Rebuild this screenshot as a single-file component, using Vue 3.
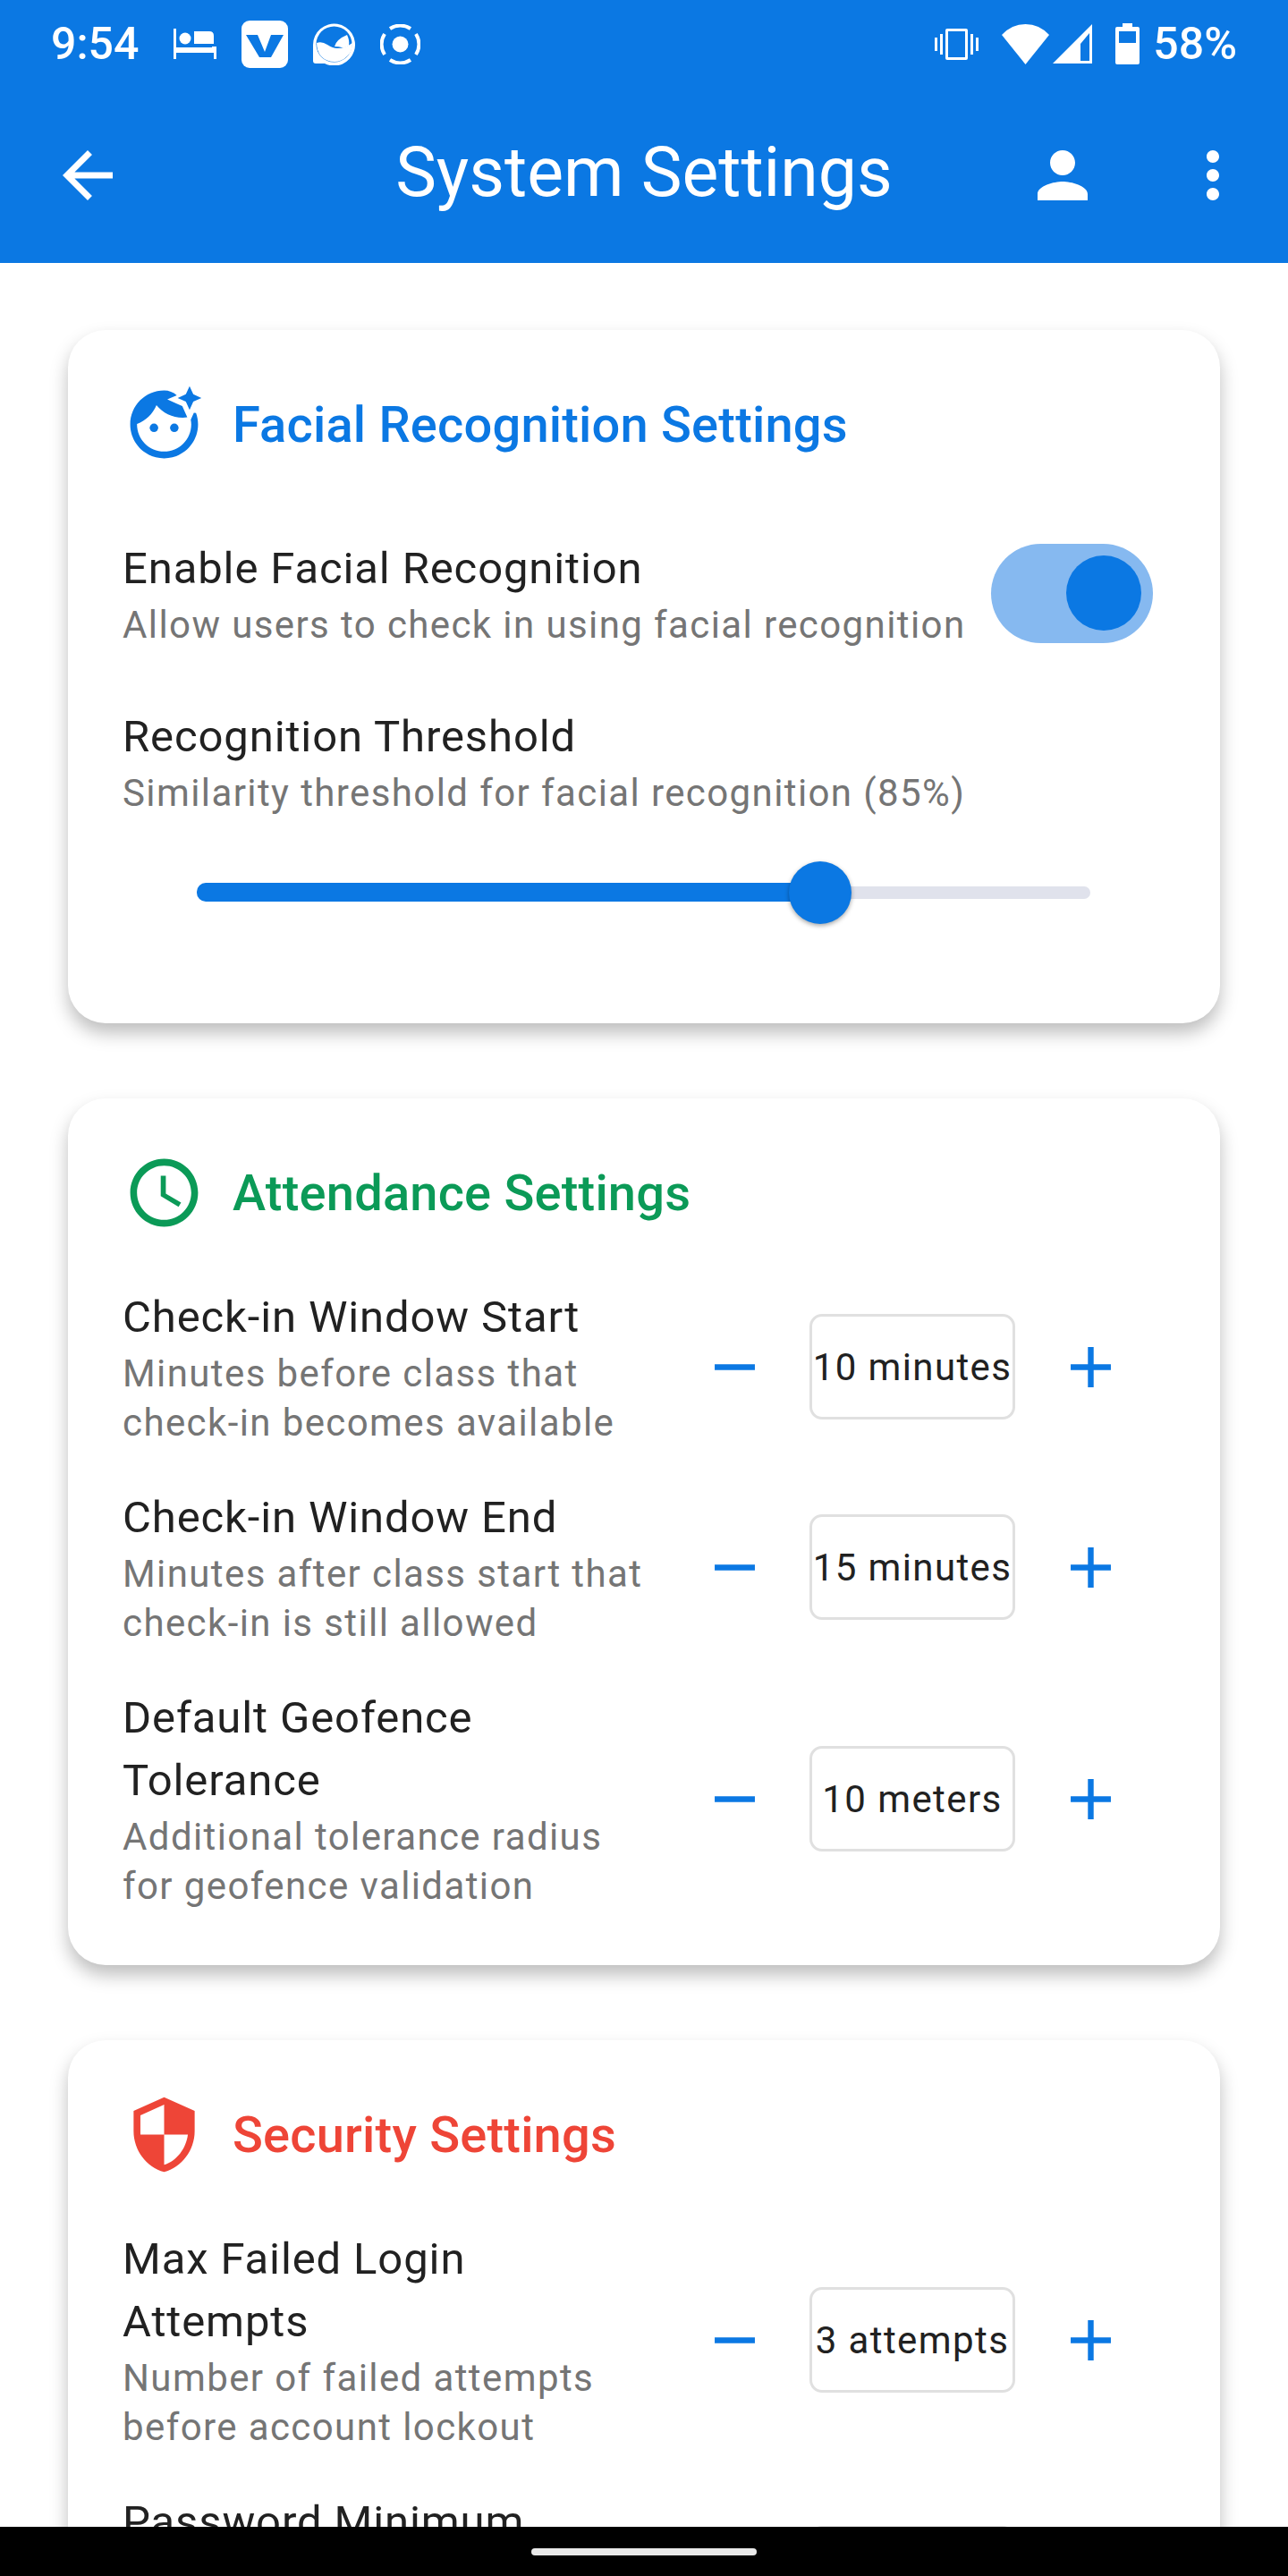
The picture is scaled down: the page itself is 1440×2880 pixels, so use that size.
<template>
  <div class="screen">
    <div class="status-bar">
      <div class="status-left">
        <span class="time">9:54</span>
        <svg class="ic-bed" width="48" height="34" viewBox="0 0 48 34" fill="#fff">
          <path d="M0 0h3v21h40v-1h2V8q0-5-5-5H23v14h22v3h3v14h-3v-7H3v7H0z" />
          <circle cx="13" cy="11" r="6.5" />
        </svg>
        <svg width="52" height="53" viewBox="0 0 52 53">
          <rect width="52" height="53" rx="9" fill="#fff" />
          <path d="M5 16h13l8 19 7-19h14L33 41H20z" fill="#0b78e3" />
        </svg>
        <svg width="47" height="47" viewBox="0 0 47 47">
          <path d="M0 24a23.500 23.500 0 1 1 13 21H3q-3 0-3-3z" fill="#fff" />
          <circle cx="23.500" cy="23.500" r="20" fill="#0b78e3" />
          <path d="M4 22q6-2 12 2t11 4q9 0 17-6 0 10-6 15-6 6-14 6-9 0-15-6-5-6-5-15z" fill="#fff" />
          <path d="M24 26q2-8 14-13 3 6 2 12-5 3-8 2t-8-1z" fill="#fff" />
        </svg>
        <svg width="45" height="45" viewBox="0 0 45 45" fill="none" stroke="#fff" stroke-width="4">
          <circle cx="22.500" cy="22.500" r="9" fill="#fff" stroke="none" />
          <path d="M11 5a21 21 0 0 1 23 0M40 11a21 21 0 0 1 0 23M34 40a21 21 0 0 1-23 0M5 34a21 21 0 0 1 0-23" />
        </svg>
      </div>
      <div class="status-right">
        <svg width="49" height="35" viewBox="0 0 49 35" fill="#fff">
          <path d="M14 0h21q2 0 2 2v31q0 2-2 2H14q-2 0-2-2V2q0-2 2-2zm1 3v29h19V3z" />
          <rect x="0" y="10" width="3" height="15" />
          <rect x="6" y="6" width="3" height="23" />
          <rect x="40" y="6" width="3" height="23" />
          <rect x="46" y="10" width="3" height="15" />
        </svg>
        <svg width="53" height="45" viewBox="0 0 53 45" fill="#fff">
          <path d="M0 12Q11 0 26.500 0T53 12L26.500 45z" />
        </svg>
        <svg width="44" height="44" viewBox="0 0 44 44" fill="#fff" fill-rule="evenodd">
          <path d="M44 0v44H0zM41 10 31 22v19h10z" />
        </svg>
        <svg width="27" height="46" viewBox="0 0 27 46" fill="#fff" fill-rule="evenodd">
          <path d="M8 0h11v4h6q2 0 2 2v38q0 2-2 2H2q-2 0-2-2V6q0-2 2-2h6zM4 9v13h19V9z" />
        </svg>
        <span class="time">58%</span>
      </div>
    </div>

    <header class="app-bar">
      <div class="bar-left">
        <button class="bar-btn">
          <svg width="84" height="84" viewBox="0 0 24 24" fill="#fff"><path d="M20 11H7.830l5.590-5.590L12 4l-8 8 8 8 1.410-1.410L7.830 13H20v-2z" /></svg>
        </button>
      </div>
      <h1 class="bar-title">System Settings</h1>
      <div class="bar-right">
        <button class="bar-btn">
          <svg width="84" height="84" viewBox="0 0 24 24" fill="#fff"><path d="M12 12c2.210 0 4-1.790 4-4s-1.790-4-4-4-4 1.790-4 4 1.790 4 4 4zm0 2c-2.670 0-8 1.340-8 4v2h16v-2c0-2.660-5.330-4-8-4z" /></svg>
        </button>
        <button class="bar-btn">
          <svg width="84" height="84" viewBox="0 0 24 24" fill="#fff"><path d="M12 8c1.100 0 2-.9 2-2s-.9-2-2-2-2 .9-2 2 .9 2 2 2zm0 2c-1.100 0-2 .9-2 2s.9 2 2 2 2-.9 2-2-.9-2-2-2zm0 6c-1.100 0-2 .9-2 2s.9 2 2 2 2-.9 2-2-.9-2-2-2z" /></svg>
        </button>
      </div>
    </header>

    <main class="content">
      <section class="card">
        <div class="card-head blue">
          <svg width="91" height="91" viewBox="0 0 24 24" fill="currentColor">
            <circle cx="9" cy="13" r="1.250" />
            <circle cx="15" cy="13" r="1.250" />
            <path d="M20.770 8.580l-.92 2.010c.09.46.15.93.15 1.410 0 4.410-3.590 8-8 8s-8-3.590-8-8c0-.05.01-.1 0-.14 2.600-.98 4.690-2.990 5.740-5.550C11.580 8.560 14.370 10 17.500 10c.45 0 .89-.04 1.330-.1l-.6-1.320-.88-1.960-1.960-.88-2.460-1.100 2.800-1.200C14.700 2.500 13.400 2 12 2 6.480 2 2 6.480 2 12s4.480 10 10 10 10-4.480 10-10c0-1.180-.21-2.320-.6-3.380z" />
            <path d="M19.500 .7l1.100 2.400 2.400 1.100-2.400 1.100-1.100 2.400-1.100-2.400-2.400-1.100 2.400-1.100z" />
          </svg>
          <h2>Facial Recognition Settings</h2>
        </div>
        <div class="rows">
          <div class="row switch-row">
            <div class="row-text">
              <div class="label">Enable Facial Recognition</div>
              <div class="sub">Allow users to check in using facial recognition</div>
            </div>
            <div class="switch"><div class="switch-thumb"></div></div>
          </div>
          <div class="row-text">
            <div class="label">Recognition Threshold</div>
            <div class="sub">Similarity threshold for facial recognition (85%)</div>
            <div class="slider">
              <div class="slider-rest"></div>
              <div class="slider-fill" :style="{ width: threshold + '%' }"></div>
              <div class="slider-thumb"></div>
            </div>
          </div>
        </div>
      </section>

      <section v-for="group in groups" :key="group.title" class="card">
        <div class="card-head" :class="group.color">
          <svg width="91" height="91" viewBox="0 0 24 24" fill="currentColor"><path :d="group.icon" /></svg>
          <h2>{{ group.title }}</h2>
        </div>
        <div class="rows">
          <div v-for="item in group.items" :key="item.label" class="row">
            <div class="row-text">
              <div class="label">{{ item.label }}</div>
              <div class="sub">{{ item.sub }}</div>
            </div>
            <div class="stepper">
              <button class="step-btn">
                <svg width="77" height="77" viewBox="0 0 24 24" fill="#0b78e3"><path d="M19 13H5v-2h14v2z" /></svg>
              </button>
              <div class="step-value">{{ item.value }}</div>
              <button class="step-btn">
                <svg width="77" height="77" viewBox="0 0 24 24" fill="#0b78e3"><path d="M19 13h-6v6h-2v-6H5v-2h6V5h2v6h6v2z" /></svg>
              </button>
            </div>
          </div>
        </div>
      </section>
    </main>

    <div class="nav-bar"><div class="nav-handle"></div></div>
  </div>
</template>

<script setup>
import { ref } from 'vue'

const threshold = ref(69.600)

const groups = [
  {
    title: 'Attendance Settings',
    color: 'green',
    icon: 'M11.990 2C6.470 2 2 6.480 2 12s4.470 10 9.990 10C17.520 22 22 17.520 22 12S17.520 2 11.990 2zM12 20c-4.420 0-8-3.580-8-8s3.580-8 8-8 8 3.580 8 8-3.580 8-8 8zM12.500 7H11v6l5.250 3.150.75-1.230-4.500-2.670z',
    items: [
      { label: 'Check-in Window Start', sub: 'Minutes before class that check-in becomes available', value: '10 minutes' },
      { label: 'Check-in Window End', sub: 'Minutes after class start that check-in is still allowed', value: '15 minutes' },
      { label: 'Default Geofence Tolerance', sub: 'Additional tolerance radius for geofence validation', value: '10 meters' }
    ]
  },
  {
    title: 'Security Settings',
    color: 'red',
    icon: 'M12 1L3 5v6c0 5.550 3.840 10.740 9 12 5.160-1.260 9-6.450 9-12V5l-9-4zm0 10.990h7c-.53 4.120-3.280 7.790-7 8.940V12H5V6.300l7-3.110v8.800z',
    items: [
      { label: 'Max Failed Login Attempts', sub: 'Number of failed attempts before account lockout', value: '3 attempts' },
      { label: 'Password Minimum Length', sub: 'Minimum required characters', value: '8 characters' }
    ]
  }
]
</script>

<style scoped>
.screen {
  height: 2880px;
  display: flex;
  flex-direction: column;
  overflow: hidden;
  background: #fff;
  font-family: Roboto, sans-serif;
  color: #212121;
}

.status-bar {
  height: 98px;
  flex: none;
  background: #0b78e3;
  display: flex;
  justify-content: space-between;
  align-items: center;
  padding: 0 57px;
  color: #fff;
}

.status-left,
.status-right {
  display: flex;
  align-items: center;
}

.status-left {
  gap: 28px;
}

.status-right {
  gap: 26px;
}

.status-right svg:nth-child(2) {
  margin-right: -22px;
}

.status-right span {
  margin-left: -11px;
}

.time {
  font-size: 50px;
  line-height: 57px;
  font-weight: 500;
}

.ic-bed {
  margin-left: 11px;
}

.app-bar {
  height: 196px;
  flex: none;
  background: #0b78e3;
  display: grid;
  grid-template-columns: 1fr auto 1fr;
  align-items: center;
}

.bar-left {
  display: flex;
  padding-left: 14px;
}

.bar-right {
  display: flex;
  justify-content: flex-end;
}

.bar-btn,
.step-btn {
  width: 168px;
  height: 168px;
  flex: none;
  border: 0;
  padding: 0;
  background: none;
  display: flex;
  align-items: center;
  justify-content: center;
}

.bar-title {
  margin: 0 0 6px;
  font-size: 77px;
  line-height: 90px;
  font-weight: 400;
  color: #fff;
  white-space: nowrap;
}

.content {
  flex: 1;
  min-height: 0;
  overflow: hidden;
  padding: 75px 76px 0;
  display: flex;
  flex-direction: column;
  gap: 84px;
}

.card {
  flex: none;
  background: #fff;
  border-radius: 42px;
  box-shadow: 0 11px 20px rgba(0, 0, 0, 0.26);
  padding: 60px 61px 61px 62px;
}

.card-head {
  display: flex;
  align-items: center;
  gap: 31px;
  height: 91px;
  margin-bottom: 59px;
}

.card-head h2 {
  margin: 0;
  font-size: 56px;
  line-height: 66px;
  font-weight: 500;
  letter-spacing: 0.200px;
}

.blue {
  color: #0b78e3;
}

.green {
  color: #0b9a57;
}

.red {
  color: #ee4537;
}

.rows {
  display: flex;
  flex-direction: column;
  gap: 44px;
  margin-left: -1px;
}

.row {
  display: flex;
  align-items: center;
}

.switch-row {
  height: 168px;
  margin-bottom: -2px;
}

.row-text {
  flex: 1;
  min-width: 0;
}

.label {
  font-size: 49px;
  line-height: 70px;
  letter-spacing: 0.880px;
  color: #212121;
}

.sub {
  font-size: 42px;
  line-height: 55px;
  letter-spacing: 1.400px;
  color: #757575;
}

.switch {
  flex: none;
  width: 181px;
  height: 111px;
  margin-right: 14px;
  border-radius: 56px;
  background: #86b9f0;
  display: flex;
  align-items: center;
  justify-content: flex-end;
  padding-right: 13px;
  box-sizing: border-box;
}

.switch-thumb {
  width: 84px;
  height: 84px;
  border-radius: 50%;
  background: #0b78e3;
}

.slider {
  position: relative;
  height: 168px;
  margin: 0 84px 1px 83px;
}

.slider-rest {
  position: absolute;
  left: 0;
  right: 0;
  top: 77px;
  height: 14px;
  border-radius: 7px;
  background: #e0e2ec;
}

.slider-fill {
  position: absolute;
  left: 0;
  top: 73px;
  height: 21px;
  border-radius: 10px;
  background: #0b78e3;
}

.slider-thumb {
  position: absolute;
  left: 662px;
  top: 49px;
  width: 70px;
  height: 70px;
  border-radius: 50%;
  background: #0b78e3;
  box-shadow: 0 2px 5px rgba(0, 0, 0, 0.35);
}

.stepper {
  flex: none;
  display: flex;
  align-items: center;
}

.step-value {
  width: 230px;
  height: 118px;
  box-sizing: border-box;
  border: 3.500px solid #e0e0e0;
  border-radius: 14px;
  display: flex;
  align-items: center;
  justify-content: center;
  font-size: 42px;
  letter-spacing: 1.400px;
  white-space: nowrap;
  color: #212121;
}

.nav-bar {
  height: 55px;
  flex: none;
  background: #000;
  display: flex;
  justify-content: center;
  align-items: center;
}

.nav-handle {
  width: 252px;
  height: 8px;
  border-radius: 4px;
  background: #e8e8e8;
}
</style>
